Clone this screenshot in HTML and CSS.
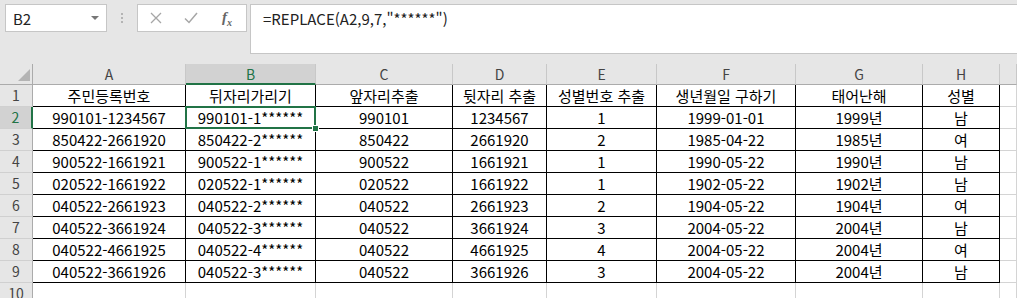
FILE: index.html
```html
<!DOCTYPE html>
<html lang="ko">
<head>
    <meta charset="UTF-8">
    <title>REPLACE</title>
    <link rel="stylesheet" href="styles.css">
</head>
<body>

    <div class="toolbar">
        <div class="namebox">
            <span>B2</span>
            <span class="caret"></span>
        </div>
        <div class="grip"><i></i><i></i><i></i></div>
        <div class="fxbtns">
            <svg class="icon" width="12" height="12" viewBox="0 0 12 12">
                <path d="M1 1 L11 11 M11 1 L1 11" stroke="#a6a6a6" stroke-width="1.3" fill="none"/>
            </svg>
            <svg class="icon" width="14" height="12" viewBox="0 0 14 12">
                <path d="M1 6.5 L5 10.5 L13 1" stroke="#a6a6a6" stroke-width="1.5" fill="none"/>
            </svg>
            <span class="fx">f<sub>x</sub></span>
        </div>
        <div class="formula">=REPLACE(A2,9,7,"******")</div>
    </div>

    <div class="sheet">
        <div class="corner">
            <svg width="12" height="12" viewBox="0 0 12 12"><path d="M12 0 L12 12 L0 12 Z" fill="#b4b4b4"/></svg>
        </div>
        <div class="hd">A</div>
        <div class="hd active">B</div>
        <div class="hd">C</div>
        <div class="hd">D</div>
        <div class="hd">E</div>
        <div class="hd">F</div>
        <div class="hd">G</div>
        <div class="hd">H</div>
        <div class="hd"></div>

        <div class="rh">1</div>
        <div class="cell t">주민등록번호</div>
        <div class="cell t">뒤자리가리기</div>
        <div class="cell t">앞자리추출</div>
        <div class="cell t">뒷자리 추출</div>
        <div class="cell t">성별번호 추출</div>
        <div class="cell t">생년월일 구하기</div>
        <div class="cell t">태어난해</div>
        <div class="cell t">성별</div>
        <div class="cell"></div>

        <div class="rh active">2</div>
        <div class="cell t">990101-1234567</div>
        <div class="cell t sel">990101-1******</div>
        <div class="cell t">990101</div>
        <div class="cell t">1234567</div>
        <div class="cell t">1</div>
        <div class="cell t">1999-01-01</div>
        <div class="cell t">1999년</div>
        <div class="cell t">남</div>
        <div class="cell"></div>

        <div class="rh">3</div>
        <div class="cell t">850422-2661920</div>
        <div class="cell t">850422-2******</div>
        <div class="cell t">850422</div>
        <div class="cell t">2661920</div>
        <div class="cell t">2</div>
        <div class="cell t">1985-04-22</div>
        <div class="cell t">1985년</div>
        <div class="cell t">여</div>
        <div class="cell"></div>

        <div class="rh">4</div>
        <div class="cell t">900522-1661921</div>
        <div class="cell t">900522-1******</div>
        <div class="cell t">900522</div>
        <div class="cell t">1661921</div>
        <div class="cell t">1</div>
        <div class="cell t">1990-05-22</div>
        <div class="cell t">1990년</div>
        <div class="cell t">남</div>
        <div class="cell"></div>

        <div class="rh">5</div>
        <div class="cell t">020522-1661922</div>
        <div class="cell t">020522-1******</div>
        <div class="cell t">020522</div>
        <div class="cell t">1661922</div>
        <div class="cell t">1</div>
        <div class="cell t">1902-05-22</div>
        <div class="cell t">1902년</div>
        <div class="cell t">남</div>
        <div class="cell"></div>

        <div class="rh">6</div>
        <div class="cell t">040522-2661923</div>
        <div class="cell t">040522-2******</div>
        <div class="cell t">040522</div>
        <div class="cell t">2661923</div>
        <div class="cell t">2</div>
        <div class="cell t">1904-05-22</div>
        <div class="cell t">1904년</div>
        <div class="cell t">여</div>
        <div class="cell"></div>

        <div class="rh">7</div>
        <div class="cell t">040522-3661924</div>
        <div class="cell t">040522-3******</div>
        <div class="cell t">040522</div>
        <div class="cell t">3661924</div>
        <div class="cell t">3</div>
        <div class="cell t">2004-05-22</div>
        <div class="cell t">2004년</div>
        <div class="cell t">남</div>
        <div class="cell"></div>

        <div class="rh">8</div>
        <div class="cell t">040522-4661925</div>
        <div class="cell t">040522-4******</div>
        <div class="cell t">040522</div>
        <div class="cell t">4661925</div>
        <div class="cell t">4</div>
        <div class="cell t">2004-05-22</div>
        <div class="cell t">2004년</div>
        <div class="cell t">여</div>
        <div class="cell"></div>

        <div class="rh">9</div>
        <div class="cell t">040522-3661926</div>
        <div class="cell t">040522-3******</div>
        <div class="cell t">040522</div>
        <div class="cell t">3661926</div>
        <div class="cell t">3</div>
        <div class="cell t">2004-05-22</div>
        <div class="cell t">2004년</div>
        <div class="cell t">남</div>
        <div class="cell"></div>

        <div class="rh">10</div>
        <div class="cell"></div>
        <div class="cell"></div>
        <div class="cell"></div>
        <div class="cell"></div>
        <div class="cell"></div>
        <div class="cell"></div>
        <div class="cell"></div>
        <div class="cell"></div>
        <div class="cell"></div>
    </div>

</body>
</html>
```

FILE: styles.css
```css
body {
    margin: 0;
    padding: 0;
    background-color: #e6e6e6;
    font-family: 'Noto Sans CJK KR', 'Noto Sans', sans-serif;
    color: black;
    overflow: hidden;
}

.toolbar {
    display: flex;
    align-items: flex-start;
    height: 64px;
    box-sizing: border-box;
    padding: 4px 0 0 5px;
}

.namebox {
    width: 102px;
    height: 28px;
    box-sizing: border-box;
    background: white;
    border: 1px solid #c6c6c6;
    display: flex;
    align-items: center;
    justify-content: space-between;
    padding: 0 7px 0 7px;
    font-size: 15px;
    color: #222;
}

.caret {
    width: 0;
    height: 0;
    border-left: 4px solid transparent;
    border-right: 4px solid transparent;
    border-top: 4px solid #777;
}

.grip {
    width: 30px;
    height: 28px;
    display: flex;
    flex-direction: column;
    align-items: center;
    justify-content: center;
    gap: 2px;
}

.grip i {
    display: block;
    width: 2px;
    height: 2px;
    background: #b4b4b4;
}

.fxbtns {
    width: 110px;
    height: 28px;
    box-sizing: border-box;
    background: white;
    border: 1px solid #c6c6c6;
    display: flex;
    align-items: center;
    padding-left: 12px;
    gap: 22px;
}

.fx {
    font-family: 'Liberation Serif', serif;
    font-style: italic;
    font-weight: bold;
    font-size: 15px;
    color: #666;
    margin-left: 2px;
}

.fx sub {
    font-size: 10px;
}

.formula {
    flex: 1;
    height: 50px;
    box-sizing: border-box;
    margin-left: 3px;
    margin-right: -2px;
    background: white;
    border: 1px solid #c6c6c6;
    padding: 3px 0 0 12px;
    font-size: 15px;
    line-height: 21px;
    color: #222;
}

.sheet {
    display: grid;
    grid-template-columns: 33px 153px 130px 137px 94px 110px 139px 127px 77px 1fr;
    grid-template-rows: 21px repeat(10, 22px);
    background: white;
}

.sheet > div {
    box-sizing: border-box;
    text-align: center;
    white-space: nowrap;
    overflow: hidden;
}

.corner {
    background: #e6e6e6;
    border-right: 1px solid #ababab;
    border-bottom: 1px solid #ababab;
    display: flex;
    align-items: flex-end;
    justify-content: flex-end;
    padding: 0 2px 3px 0;
}

.corner svg {
    display: block;
}

.hd {
    background: #e6e6e6;
    border-right: 1px solid #c8c8c8;
    border-bottom: 1px solid #ababab;
    font-size: 14px;
    line-height: 20px;
    color: #444;
}

.hd.active {
    background: #d2d2d2;
    color: #217346;
    border-bottom: 2px solid #217346;
}

.rh {
    background: #e6e6e6;
    border-right: 1px solid #ababab;
    border-bottom: 1px solid #d0d0d0;
    font-size: 14px;
    line-height: 21px;
    color: #444;
}

.rh.active {
    background: #d2d2d2;
    color: #217346;
    border-right: 2px solid #217346;
}

.cell {
    border-right: 1px solid #d4d4d4;
    border-bottom: 1px solid #d4d4d4;
    font-size: 15px;
    line-height: 21px;
}

.cell.t {
    border-right-color: black;
    border-bottom-color: black;
}

.sheet > .sel {
    position: relative;
    overflow: visible;
}

.sel::before {
    content: "";
    position: absolute;
    left: -1px;
    top: -1px;
    right: -1px;
    bottom: -1px;
    border: 2px solid #217346;
}

.sel::after {
    content: "";
    position: absolute;
    right: -4px;
    bottom: -4px;
    width: 5px;
    height: 5px;
    background: #217346;
    border: 1px solid white;
}
```
